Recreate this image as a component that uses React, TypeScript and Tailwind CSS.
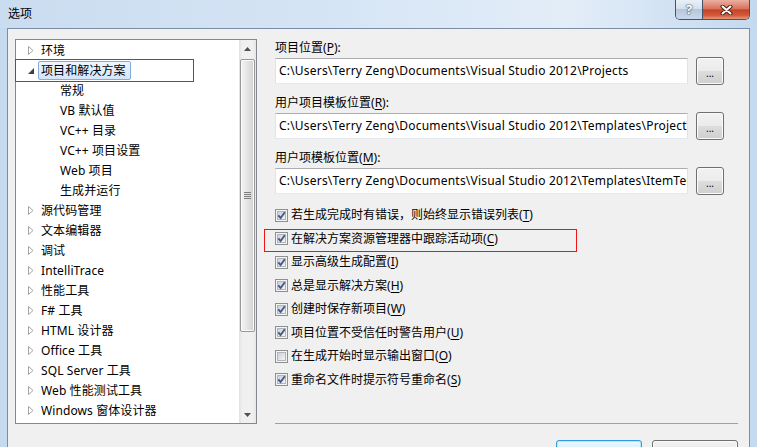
const tree = [
  { label: '环境', level: 0, arrow: 'closed' },
  { label: '项目和解决方案', level: 0, arrow: 'open', selected: true },
  { label: '常规', level: 1 },
  { label: 'VB 默认值', level: 1 },
  { label: 'VC++ 目录', level: 1 },
  { label: 'VC++ 项目设置', level: 1 },
  { label: 'Web 项目', level: 1 },
  { label: '生成并运行', level: 1 },
  { label: '源代码管理', level: 0, arrow: 'closed' },
  { label: '文本编辑器', level: 0, arrow: 'closed' },
  { label: '调试', level: 0, arrow: 'closed' },
  { label: 'IntelliTrace', level: 0, arrow: 'closed' },
  { label: '性能工具', level: 0, arrow: 'closed' },
  { label: 'F# 工具', level: 0, arrow: 'closed' },
  { label: 'HTML 设计器', level: 0, arrow: 'closed' },
  { label: 'Office 工具', level: 0, arrow: 'closed' },
  { label: 'SQL Server 工具', level: 0, arrow: 'closed' },
  { label: 'Web 性能测试工具', level: 0, arrow: 'closed' },
  { label: 'Windows 窗体设计器', level: 0, arrow: 'closed' },
]

const paths = [
  { label: '项目位置', key: 'P', value: 'C:\\Users\\Terry Zeng\\Documents\\Visual Studio 2012\\Projects' },
  { label: '用户项目模板位置', key: 'R', value: 'C:\\Users\\Terry Zeng\\Documents\\Visual Studio 2012\\Templates\\ProjectTemplates' },
  { label: '用户项模板位置', key: 'M', value: 'C:\\Users\\Terry Zeng\\Documents\\Visual Studio 2012\\Templates\\ItemTemplates' },
]

const options = [
  { label: '若生成完成时有错误，则始终显示错误列表', key: 'T', checked: true },
  { label: '在解决方案资源管理器中跟踪活动项', key: 'C', checked: true, marked: true },
  { label: '显示高级生成配置', key: 'I', checked: true },
  { label: '总是显示解决方案', key: 'H', checked: true },
  { label: '创建时保存新项目', key: 'W', checked: true },
  { label: '项目位置不受信任时警告用户', key: 'U', checked: true },
  { label: '在生成开始时显示输出窗口', key: 'O', checked: false },
  { label: '重命名文件时提示符号重命名', key: 'S', checked: true },
]

function Arrow({ kind }: { kind?: string }) {
  if (kind === 'open') {
    return (
      <svg width="6" height="9" viewBox="0 0 6 9">
        <path d="M6 2 L6 8 L0 8 Z" fill="#3f3f3f" />
      </svg>
    )
  }
  if (kind === 'closed') {
    return (
      <svg width="6" height="9" viewBox="0 0 6 9">
        <path d="M0.5 0.5 L5 4.5 L0.5 8.5 Z" fill="#ffffff" stroke="#a5a5a5" />
      </svg>
    )
  }
  return <span className="w-[6px]" />
}

function CheckBox({ checked }: { checked: boolean }) {
  return (
    <svg width="13" height="13" viewBox="0 0 13 13" className="shrink-0">
      <defs>
        <linearGradient id="cbfill" x1="0" y1="0" x2="1" y2="1">
          <stop offset="0" stopColor="#c9ced5" />
          <stop offset="1" stopColor="#f7f7f7" />
        </linearGradient>
      </defs>
      <rect x="0.5" y="0.5" width="12" height="12" fill="#f5f5f5" stroke="#8e8f8f" />
      <rect x="2.5" y="2.5" width="8" height="8" fill="url(#cbfill)" stroke="#b0b5bc" />
      {checked && (
        <path d="M3.3 6.4 L5.6 9 L9.8 3.2" fill="none" stroke="#46598a" strokeWidth="1.9" />
      )}
    </svg>
  )
}

function Accel({ label, k }: { label: string; k: string }) {
  return (
    <>
      {label}(<span className="underline underline-offset-[2px]">{k}</span>)
    </>
  )
}

export default function App() {
  return (
    <div className="w-[757px] h-[447px] overflow-hidden flex flex-col bg-[#c5d9ef] font-['Noto_Sans','Noto_Sans_CJK_SC',sans-serif] text-[12px] text-black">
      {/* title bar */}
      <div className="h-[28px] shrink-0 flex items-start bg-[linear-gradient(90deg,#cadcf0_0%,#d6e5f5_45%,#e3edf8_75%,#c4d9ef_100%)]">
        <span className="pl-[8px] pt-[5px] leading-[17px]">选项</span>
        <div className="ml-auto mr-[7px] flex h-[20px] rounded-b-[5px] border border-t-0 border-[#43536a] overflow-hidden">
          <div className="w-[27px] flex items-center justify-center border-r border-[#43536a] bg-[linear-gradient(#e9f0f8_0%,#d5e1ee_45%,#b6c7db_50%,#c9d9ea_100%)] text-white font-bold text-[13px] leading-none [text-shadow:0_0_2px_#2a3a50,0_0_1px_#2a3a50]">
            ?
          </div>
          <div className="w-[46px] flex items-center justify-center bg-[linear-gradient(#eab0a2_0%,#d9745d_45%,#c6432a_52%,#d2583a_80%,#e69a7a_100%)]">
            <svg width="13" height="10" viewBox="0 0 13 10">
              <path d="M2.5 1.5 L10.5 8.5 M10.5 1.5 L2.5 8.5" stroke="#4a2018" strokeWidth="4" strokeLinecap="round" />
              <path d="M2.5 1.5 L10.5 8.5 M10.5 1.5 L2.5 8.5" stroke="#ffffff" strokeWidth="2" strokeLinecap="round" />
            </svg>
          </div>
        </div>
      </div>

      {/* client */}
      <div className="flex-1 flex px-[7px]">
        <div className="flex-1 bg-[#f0f0f0] border-l border-t border-r border-[#7b8ea6] pl-[7px] pt-[10px] pr-[11px]">
          <div className="flex h-[385px] gap-[18px]">
            {/* tree */}
            <div className="relative w-[242px] shrink-0 flex border border-[#828790] bg-white">
              <div className="flex-1 flex flex-col">
                {tree.map((item) => (
                  <div
                    key={item.label}
                    className={`h-[20px] shrink-0 flex items-center ${item.level ? 'pl-[31px]' : 'pl-[12px]'}`}
                  >
                    <Arrow kind={item.arrow} />
                    <span
                      className={`ml-[4px] h-[19px] px-[2px] pr-[4px] flex items-center whitespace-nowrap leading-[17px] tracking-[0.1px] rounded-[2px] border ${
                        item.selected
                          ? 'border-[#84acdd] bg-gradient-to-b from-[#eef5fe] to-[#d3e5fc]'
                          : 'border-transparent'
                      }`}
                    >
                      {item.label}
                    </span>
                  </div>
                ))}
              </div>
              {/* scrollbar */}
              <div className="w-[17px] flex flex-col bg-[linear-gradient(90deg,#e2e2e2,#f0f0f0_20%,#f0f0f0_80%,#e6e6e6)]">
                <div className="h-[17px] flex items-center justify-center">
                  <svg width="7" height="4" viewBox="0 0 7 4">
                    <path d="M3.5 0 L7 4 L0 4 Z" fill="#505050" />
                  </svg>
                </div>
                <div className="flex-1 px-[1px]">
                  <div className="mt-[2px] h-[273px] rounded-[2px] border border-[#979797] bg-[linear-gradient(90deg,#f4f4f4,#e4e4e4_50%,#d2d2d2)] shadow-[inset_0_0_0_1px_#fafafa] flex flex-col items-center justify-center gap-[1px]">
                    <span className="w-[7px] h-px bg-[#7d7d7d]" />
                    <span className="w-[7px] h-px bg-[#7d7d7d]" />
                    <span className="w-[7px] h-px bg-[#7d7d7d]" />
                    <span className="w-[7px] h-px bg-[#7d7d7d]" />
                  </div>
                </div>
                <div className="h-[17px] flex items-center justify-center">
                  <svg width="7" height="4" viewBox="0 0 7 4">
                    <path d="M0 0 L7 0 L3.5 4 Z" fill="#505050" />
                  </svg>
                </div>
              </div>
              <div className="absolute left-[-1px] top-[19px] w-[179px] h-[23px] border border-[#f01515]" />
            </div>

            {/* settings */}
            <div className="flex-1 flex flex-col">
              {paths.map((p, i) => (
                <div key={p.key} className={i ? 'mt-[9px]' : ''}>
                  <div className="h-[18px] leading-[18px] whitespace-nowrap">
                    <Accel label={p.label} k={p.key} />:
                  </div>
                  <div className="h-[28px] flex items-center">
                    <div className="w-[413px] h-[26px] flex items-center pl-[3px] overflow-hidden whitespace-nowrap bg-white border border-[#e2e3ea] border-t-[#abadb3] border-b-[#e3e9ef] leading-[18px] tracking-[0.2px]">
                      {p.value}
                    </div>
                    <div className="ml-[8px] w-[28px] h-[28px] flex items-center justify-center pt-[3px] rounded-[3px] border border-[#707070] bg-[linear-gradient(#f2f2f2_0%,#ebebeb_50%,#dddddd_50%,#cfcfcf_100%)] shadow-[inset_0_0_0_1px_#fbfbfb] text-[10px] leading-none">
                      ...
                    </div>
                  </div>
                </div>
              ))}

              <div className="mt-[8.5px] flex flex-col">
                {options.map((o) => (
                  <div key={o.key} className="relative h-[23.5px] flex items-center gap-[3px]">
                    <CheckBox checked={o.checked} />
                    <span className="whitespace-nowrap leading-[18px]">
                      <Accel label={o.label} k={o.key} />
                    </span>
                    {o.marked && (
                      <div className="absolute left-[-11px] top-[2px] w-[313px] h-[23px] border border-[#f01515]" />
                    )}
                  </div>
                ))}
              </div>

              <div className="mt-auto h-px bg-[#a0a0a0]" />
            </div>
          </div>

          {/* dialog buttons */}
          <div className="mt-[16px] flex justify-end gap-[10px]">
            <div className="w-[86px] h-[23px] rounded-[3px] border border-[#3399dd] bg-[linear-gradient(#eaf6fd_0%,#d9f0fc_50%,#bee6fd_50%,#a7d9f5_100%)] shadow-[inset_0_0_0_1px_#b5e6fb]" />
            <div className="w-[86px] h-[23px] rounded-[3px] border border-[#707070] bg-[linear-gradient(#f2f2f2_0%,#ebebeb_50%,#dddddd_50%,#cfcfcf_100%)] shadow-[inset_0_0_0_1px_#fbfbfb]" />
          </div>
        </div>
      </div>
    </div>
  )
}
